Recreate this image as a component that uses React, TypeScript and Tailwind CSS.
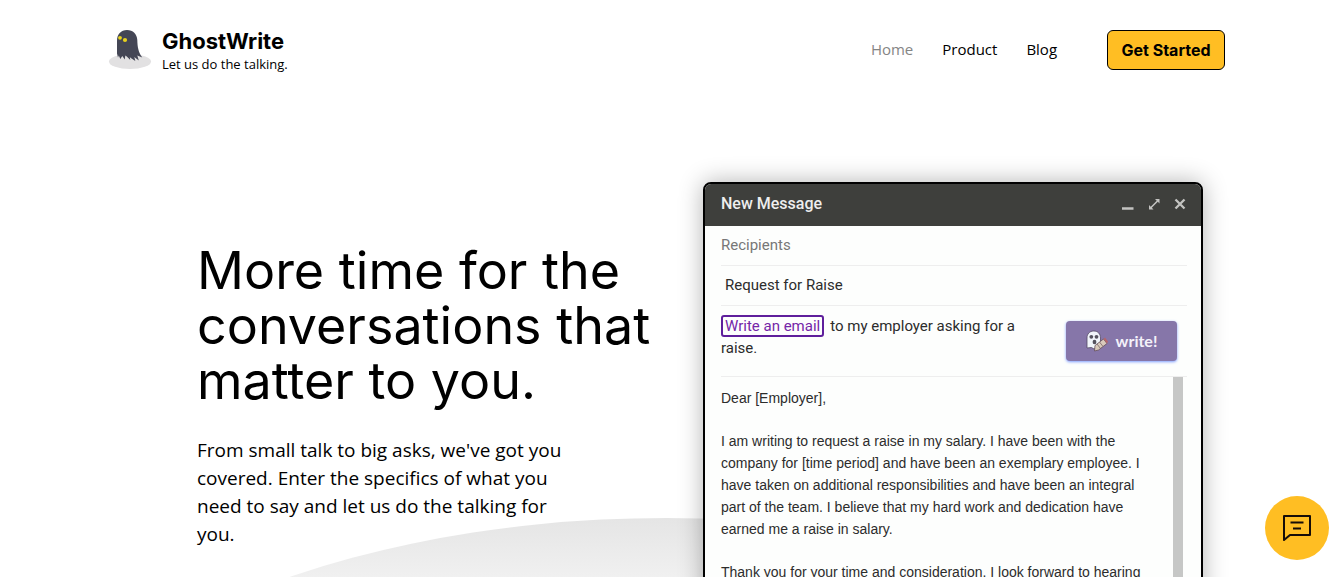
const navLinks = [
  { label: "Home", href: "#home", active: true },
  { label: "Product", href: "#product" },
  { label: "Blog", href: "#blog" },
];

const letter = [
  "Dear [Employer],",
  "I am writing to request a raise in my salary. I have been with the company for [time period] and have been an exemplary employee. I have taken on additional responsibilities and have been an integral part of the team. I believe that my hard work and dedication have earned me a raise in salary.",
  "Thank you for your time and consideration. I look forward to hearing from you.",
];

function GhostLogo() {
  return (
    <svg viewBox="0 0 44 42" className="h-[42px] w-11 shrink-0" aria-hidden="true">
      <ellipse cx="22" cy="32.500" rx="21" ry="7.500" fill="#e2e1e2" />
      <path
        d="M9 12C9 5 13 1 19 1c6 0 10 4 10.300 10 .2 7 1 12 5 17.500l-5-2 1.500 5-4.500-3.500 1 4-4.500-3-1-1 .5 3-3.500-3.500-1.500-1-.5 4-2.500-3.500-2 3-1.500-3.500-.8 2-1-4z"
        fill="#444655"
      />
      <circle cx="12" cy="8.800" r="1.900" fill="#e8d21d" />
      <circle cx="17" cy="11" r="2.100" fill="#e8d21d" />
    </svg>
  );
}

function WriteIcon() {
  return (
    <svg viewBox="0 0 22 22" className="h-[22px] w-[22px]" aria-hidden="true">
      <path d="M1 18V8c0-4 2.500-7 6.800-7s6.700 3 6.700 7v9l-2 1.500-2.500-1-2 1.500-2.500-1.500z" fill="#f1f5fb" stroke="#544a66" strokeWidth=".8" />
      <circle cx="5.300" cy="6.800" r="1.900" fill="#55535f" />
      <circle cx="10.500" cy="6.800" r="1.900" fill="#55535f" />
      <ellipse cx="8.500" cy="12" rx="1.900" ry="2.300" fill="#55535f" />
      <path d="m8.500 21 .5-5.500 8.500-6.500 3.500 4.500-8.500 6.500z" fill="#d9cabb" stroke="#66515c" strokeWidth=".8" />
      <path d="m17.500 9 1.500-1.500 3 4-1 2z" fill="#b5656b" />
      <path d="m11 14 3.500 4.500m-1-6.500 3.500 4.500" stroke="#796569" strokeWidth=".8" />
    </svg>
  );
}

function Header() {
  return (
    <header className="flex h-[100px] items-center justify-between px-[8.1%]">
      <a href="#home" className="flex items-center gap-2.5">
        <GhostLogo />
        <span className="flex flex-col">
          <span className="font-[Inter] text-[22px] font-bold leading-7">GhostWrite</span>
          <span className="font-['Open_Sans'] text-[13px] leading-[18px]">Let us do the talking.</span>
        </span>
      </a>
      <div className="flex items-center">
        <nav className="flex gap-[29px] pb-0.5 font-['Open_Sans'] text-[15px]">
          {navLinks.map((link) => (
            <a key={link.label} href={link.href} className={link.active ? "text-[#858585]" : "text-black"}>
              {link.label}
            </a>
          ))}
        </nav>
        <button
          type="button"
          className="ml-[50px] h-10 w-[118px] whitespace-nowrap rounded-md border border-black bg-[#ffbe23] font-[Inter] text-[16px] font-bold"
        >
          Get Started
        </button>
      </div>
    </header>
  );
}

function ComposeWindow() {
  return (
    <section
      aria-label="New Message"
      className="w-[500px] shrink-0 overflow-hidden rounded-lg border-2 border-black bg-[#fdfefd] font-[Roboto] text-[15px] text-[#2c2c2c] shadow-[0_0_24px_rgba(0,0,0,0.3)]"
    >
      <div className="flex h-[42px] items-center justify-between bg-[#3e3f3c] pb-0.5 pl-4 pr-3.5 font-medium text-[#eeeeee]">
        <h2 className="text-[16px]">New Message</h2>
        <div className="flex gap-3 text-[#c3c3c1]">
          <button type="button" aria-label="Minimize">
            <svg viewBox="0 0 14 14" className="size-3.5">
              <path d="M1 11.500h11.500" stroke="currentColor" strokeWidth="2.300" />
            </svg>
          </button>
          <button type="button" aria-label="Expand">
            <svg viewBox="0 0 14 14" className="size-3.5" fill="currentColor">
              <path d="M8 2h4.500v4.500l-1.700-1.700-6 6L6.500 12.500H2V8l1.700 1.700 6-6z" />
            </svg>
          </button>
          <button type="button" aria-label="Close">
            <svg viewBox="0 0 14 14" className="size-3.5">
              <path d="m2.500 2.500 9 9m0-9-9 9" stroke="currentColor" strokeWidth="2.300" />
            </svg>
          </button>
        </div>
      </div>
      <div className="pl-4 pr-3.5">
        <p className="flex h-10 items-center border-b border-[#eeeeee] text-[#777777]">Recipients</p>
        <p className="flex h-10 items-center border-b border-[#eeeeee] pl-1">Request for Raise</p>
        <div className="flex h-[71px] items-start justify-between border-b border-[#eeeeee] pr-2.5">
          <p className="w-[320px] pt-[9px] leading-[22px]">
            <mark className="mr-1.5 rounded-[3px] border-2 border-[#5f1f9c] bg-transparent px-0.5 text-[#7526a8]">
              Write an email
            </mark>
            to my employer asking for a raise.
          </p>
          <button
            type="button"
            className="mt-[15px] flex h-10 w-[111px] items-center justify-center gap-2 rounded bg-[#8676a9] font-[Lato] text-[16px] font-bold text-[#f4f1fa] shadow-[0_1px_3px_#7d9cff]"
          >
            <WriteIcon />
            write!
          </button>
        </div>
        <div className="flex justify-between pr-1">
          <div className="flex w-[440px] flex-col gap-[21px] pt-2.5 font-['Liberation_Sans'] text-[14px] leading-[22px]">
            {letter.map((paragraph) => (
              <p key={paragraph}>{paragraph}</p>
            ))}
          </div>
          <div className="w-2.5 bg-[#c6c7c6]" />
        </div>
      </div>
    </section>
  );
}

export default function App() {
  return (
    <div className="relative h-screen overflow-hidden bg-white text-black">
      <div className="absolute inset-x-0 top-[518px] h-[674px] rounded-[50%] bg-linear-to-b from-[#e5e5e5] to-white to-20%" />
      <div className="relative">
        <Header />
        <main className="flex items-start justify-between pl-[197px] pr-[130px] pt-[82px]">
          <div className="pt-[61px]">
            <h1 className="whitespace-nowrap font-[Inter] text-[52px] leading-[55px]">
              More time for the
              <br />
              conversations that
              <br />
              matter to you.
            </h1>
            <p className="mt-7 w-[380px] font-['Open_Sans'] text-[19px] leading-7">
              From small talk to big asks, we've got you covered. Enter the specifics of what you need to say and let us do
              the talking for you.
            </p>
          </div>
          <ComposeWindow />
        </main>
      </div>
      <button
        type="button"
        aria-label="Open chat"
        className="fixed bottom-[17px] right-1 grid size-16 place-items-center rounded-full bg-[#ffbe23]"
      >
        <svg viewBox="0 0 30 28" className="h-7 w-[30px]" fill="none" stroke="#160d08" strokeWidth="2">
          <path d="M2 2h26v19H8l-6 5z" strokeLinejoin="round" />
          <path d="M8.500 8.500h13m-10.500 6h8" />
        </svg>
      </button>
    </div>
  );
}
